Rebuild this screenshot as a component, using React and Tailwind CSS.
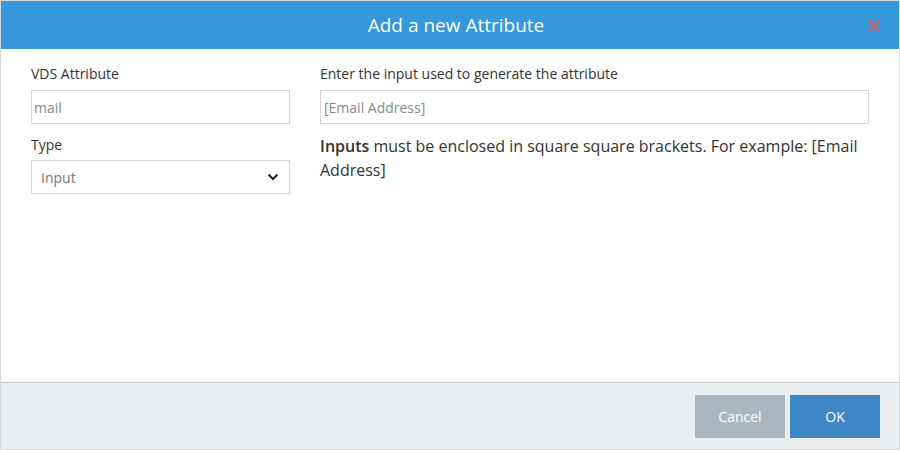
import React from "react";

export default function App() {
  return (
    <div
      className="w-[900px] h-[450px] bg-white border border-[#d9d9d9] flex flex-col overflow-hidden"
      style={{ fontFamily: '"Open Sans", sans-serif' }}
    >
      <div className="h-[48px] bg-[#3598db] relative flex items-center justify-center pl-[12px] shrink-0">
        <span className="text-white text-[19px]">Add a new Attribute</span>
        <svg
          className="absolute right-[18px] top-[18px]"
          width="14"
          height="14"
          viewBox="0 0 14 14"
        >
          <path
            d="M2.5 2.5 L11.5 11.5 M11.5 2.5 L2.5 11.5"
            stroke="#b06a84"
            strokeWidth="3.2"
            strokeLinecap="round"
          />
        </svg>
      </div>
      <div className="flex-1 flex gap-[30px] pl-[30px] pr-[30px] pt-[15px]">
        <div className="w-[259px] flex flex-col">
          <label className="text-[14px] text-[#333] leading-[20px]">VDS Attribute</label>
          <div className="mt-[6px] h-[34px] border border-[#d4d4d4] flex items-center pl-[2px] pr-[5px] pt-[1px] text-[14px] text-[#888]">
            mail
          </div>
          <label className="mt-[11px] text-[14px] text-[#333] leading-[20px]">Type</label>
          <div className="mt-[5px] h-[34px] border border-[#d4d4d4] flex items-center justify-between pl-[9px] pr-[10px] text-[14px] text-[#777]">
            <span>Input</span>
            <svg width="12" height="8" viewBox="0 0 12 8">
              <path d="M1.5 1.5 L6 6 L10.5 1.5" fill="none" stroke="#222" strokeWidth="2" />
            </svg>
          </div>
        </div>
        <div className="w-[549px] flex flex-col">
          <label className="text-[14px] text-[#333] leading-[20px]">
            Enter the input used to generate the attribute
          </label>
          <div className="mt-[6px] h-[34px] border border-[#d4d4d4] flex items-center pl-[3px] pr-[5px] text-[14px] text-[#888]">
            [Email Address]
          </div>
          <p className="mt-[10px] text-[16px] leading-[24px] text-[#333]">
            <b className="font-semibold">Inputs</b> must be enclosed in square square brackets. For example: [Email Address]
          </p>
        </div>
      </div>
      <div className="h-[67px] shrink-0 bg-[#eaeef0] border-t border-[#c2cacd] flex items-center justify-end gap-[5px] pr-[19px]">
        <button className="w-[90px] h-[43px] bg-[#abb7bf] text-white text-[14px]">Cancel</button>
        <button className="w-[90px] h-[43px] bg-[#3f88c8] text-white text-[14px]">OK</button>
      </div>
    </div>
  );
}
